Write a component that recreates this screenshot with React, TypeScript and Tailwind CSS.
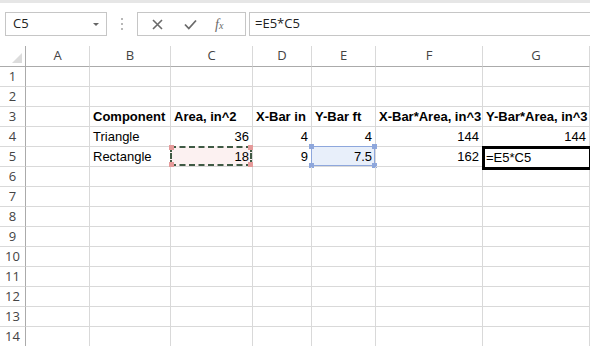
import { Fragment } from "react";

const COLS = ["A", "B", "C", "D", "E", "F", "G"];
const GRID = "grid grid-cols-[26px_64px_81px_82px_59px_64px_107px_1fr]";
const CELL = "relative flex h-[20px] items-center overflow-hidden whitespace-nowrap border-b border-r border-[#d9d9d9] px-[3px] font-['Liberation_Sans',Arial,sans-serif] text-[13px] text-black";
const HEAD = "flex items-center justify-center font-['Open_Sans','Noto_Sans',sans-serif] text-[13px] text-[#444]";

type Cell = { t: string; num?: boolean; bold?: boolean; mark?: "red" | "blue" | "edit" };

const DATA: Record<number, Cell[]> = {
  3: [
    { t: "" },
    { t: "Component", bold: true },
    { t: "Area, in^2", bold: true },
    { t: "X-Bar in", bold: true },
    { t: "Y-Bar ft", bold: true },
    { t: "X-Bar*Area, in^3", bold: true },
    { t: "Y-Bar*Area, in^3", bold: true },
  ],
  4: [
    { t: "" },
    { t: "Triangle" },
    { t: "36", num: true },
    { t: "4", num: true },
    { t: "4", num: true },
    { t: "144", num: true },
    { t: "144", num: true },
  ],
  5: [
    { t: "" },
    { t: "Rectangle" },
    { t: "18", num: true, mark: "red" },
    { t: "9", num: true },
    { t: "7.5", num: true, mark: "blue" },
    { t: "162", num: true },
    { t: "=E5*C5", mark: "edit" },
  ],
};

function Handles({ color }: { color: string }) {
  return (
    <>
      <span className={`absolute -left-[3px] -top-[3px] size-[5px] ${color}`} />
      <span className={`absolute -right-[3px] -top-[3px] size-[5px] ${color}`} />
      <span className={`absolute -bottom-[3px] -left-[3px] size-[5px] ${color}`} />
      <span className={`absolute -bottom-[3px] -right-[3px] size-[5px] ${color}`} />
    </>
  );
}

function GridCell({ c }: { c: Cell }) {
  if (c.mark === "edit") {
    return (
      <div className={`${CELL} !overflow-visible`}>
        <div className="absolute -left-[1px] -top-[1px] z-10 flex h-[24px] w-[110px] items-center border-[3px] border-black bg-white pl-[1px] text-[13px]">
          {c.t}
        </div>
      </div>
    );
  }
  return (
    <div className={`${CELL} ${c.num ? "justify-end" : ""} ${c.bold ? "font-bold" : ""} ${c.mark ? "!overflow-visible" : ""}`}>
      {c.mark === "red" && (
        <div className="absolute -left-[1px] -top-[1px] bottom-0 right-0 border-2 border-dashed border-[#3f5a44] bg-[#fcf1f1]">
          <Handles color="bg-[#e59a9a]" />
        </div>
      )}
      {c.mark === "blue" && (
        <div className="absolute -left-[1px] -top-[1px] bottom-0 right-0 border border-[#8ea7dc] bg-[#e8effa]">
          <Handles color="bg-[#8ea7dc]" />
        </div>
      )}
      <span className="relative">{c.t}</span>
    </div>
  );
}

function FormulaBar() {
  return (
    <div className="flex h-[46px] items-start border-t-[3px] border-[#e6e6e6] bg-white pt-[9px]">
      <div className="ml-[5px] flex h-[24px] w-[102px] items-center justify-between border border-[#c6c6c6] pl-[7px] pr-[7px] font-['Open_Sans','Noto_Sans',sans-serif] text-[13px] text-[#222]">
        <span>C5</span>
        <span className="h-0 w-0 border-x-[3px] border-t-[3px] border-x-transparent border-t-[#666]" />
      </div>
      <div className="ml-[14px] mt-[6px] flex flex-col gap-[3px]">
        <span className="size-[2px] bg-[#b8b8b8]" />
        <span className="size-[2px] bg-[#b8b8b8]" />
        <span className="size-[2px] bg-[#b8b8b8]" />
      </div>
      <div className="ml-[14px] flex h-[24px] w-[109px] items-center border border-[#c6c6c6] text-[#6a6a6a]">
        <svg className="ml-[14px]" width="11" height="11" viewBox="0 0 11 11">
          <path d="M1 1L10 10M10 1L1 10" stroke="#6a6a6a" strokeWidth="1.6" />
        </svg>
        <svg className="ml-[21px]" width="13" height="11" viewBox="0 0 13 11">
          <path d="M1 5.5L4.8 9.5L12 1.5" stroke="#6a6a6a" strokeWidth="1.8" fill="none" />
        </svg>
        <span className="ml-[18px] font-['Liberation_Serif',serif] text-[14px] italic text-[#6a6a6a]">
          f<span className="text-[10px]">x</span>
        </span>
      </div>
      <div className="ml-[3px] flex h-[24px] flex-1 items-center border-y border-l border-[#c6c6c6] pl-[5px] font-['Open_Sans','Noto_Sans',sans-serif] text-[13px] text-[#222]">
        =E5*C5
      </div>
    </div>
  );
}

export default function App() {
  const rows = Array.from({ length: 14 }, (_, i) => i + 1);
  return (
    <div className="h-[346px] w-[590px] overflow-hidden bg-white">
      <FormulaBar />
      <div className={GRID}>
        <div className="relative h-[21px] border-b border-r border-[#ababab]">
          <span className="absolute bottom-[3px] right-[3px] h-0 w-0 border-b-[10px] border-l-[10px] border-b-[#dcdcdc] border-l-transparent" />
        </div>
        {COLS.map((c) => (
          <div key={c} className={`${HEAD} h-[21px] border-b border-r border-b-[#ababab] border-r-[#d9d9d9]`}>
            {c}
          </div>
        ))}
        {rows.map((r) => (
          <Fragment key={r}>
            <div className={`${HEAD} h-[20px] border-b border-r border-b-[#d9d9d9] border-r-[#ababab]`}>{r}</div>
            {(DATA[r] ?? COLS.map(() => ({ t: "" }))).map((c, i) => (
              <GridCell key={i} c={c} />
            ))}
          </Fragment>
        ))}
      </div>
    </div>
  );
}
